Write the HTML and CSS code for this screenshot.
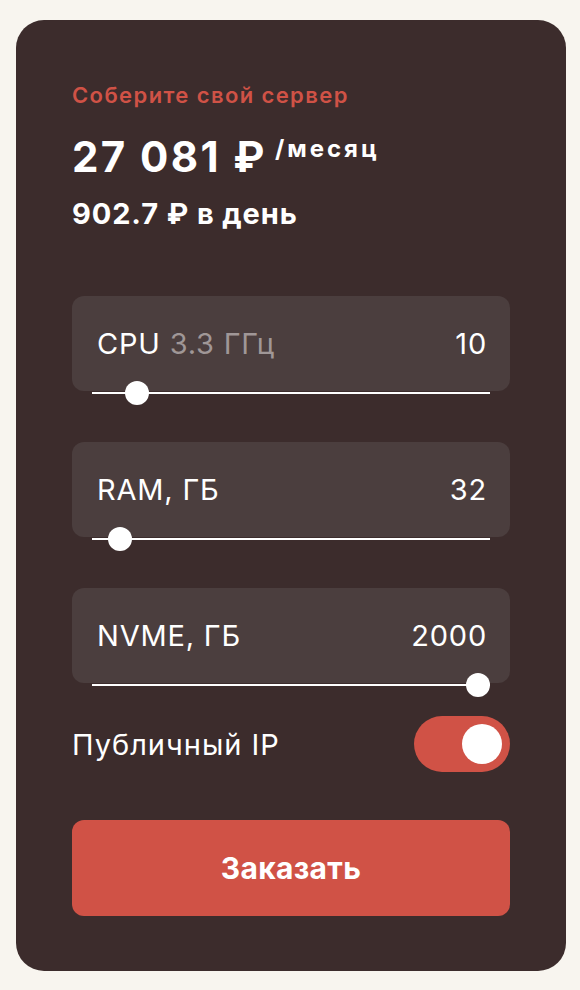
FILE: index.html
```html
<!DOCTYPE html>
<html lang="ru">
<head>
<meta charset="utf-8">
<title>Соберите свой сервер</title>
<link rel="stylesheet" href="styles.css">
</head>
<body>
<div class="card">
  <div class="eyebrow">Соберите свой сервер</div>
  <div class="price"><span class="price-main">27 081 ₽</span><span class="price-unit">/месяц</span></div>
  <div class="daily">902.7 ₽ в день</div>

  <div class="fields">
    <div class="field">
      <div class="field-box">
        <span class="field-label">CPU <span class="muted">3.3 ГГц</span></span>
        <span class="field-value">10</span>
      </div>
      <div class="track"><span class="thumb" style="--p:0.088"></span></div>
    </div>
    <div class="field">
      <div class="field-box">
        <span class="field-label">RAM, ГБ</span>
        <span class="field-value">32</span>
      </div>
      <div class="track"><span class="thumb" style="--p:0.043"></span></div>
    </div>
    <div class="field">
      <div class="field-box">
        <span class="field-label">NVME, ГБ</span>
        <span class="field-value">2000</span>
      </div>
      <div class="track"><span class="thumb" style="--p:1"></span></div>
    </div>
  </div>

  <div class="toggle-row">
    <span class="toggle-label">Публичный IP</span>
    <span class="toggle on"><span class="knob"></span></span>
  </div>

  <button class="order">Заказать</button>
</div>
</body>
</html>
```

FILE: styles.css
```css
* { box-sizing: border-box; }
html, body { margin: 0; padding: 0; }
body {
  background: #f8f5ef;
  font-family: Inter, "Noto Sans", sans-serif;
  color: #fff;
  padding: 20px 14px 19px 16px;
}
.card {
  width: 550px;
  background: #3c2c2c;
  border-radius: 28px;
  padding: 62px 56px 55px 56px;
}
.eyebrow {
  color: #d05246;
  font-size: 22px;
  font-weight: 600;
  line-height: 26px;
  letter-spacing: 1.4px;
}
.price {
  margin-top: 28px;
  display: flex;
  align-items: flex-start;
  line-height: 1;
}
.price-main {
  font-size: 42px;
  font-weight: 700;
  letter-spacing: 2.4px;
}
.price-unit {
  font-size: 24px;
  font-weight: 700;
  letter-spacing: 3px;
  margin-left: 8px;
  margin-top: 1px;
}
.daily {
  margin-top: 19px;
  font-size: 29px;
  font-weight: 700;
  line-height: 34px;
  letter-spacing: 0.9px;
}
.fields {
  margin-top: 65px;
  display: flex;
  flex-direction: column;
  gap: 48px;
}
.field-box {
  height: 95px;
  background: #4b3e3e;
  border-radius: 12px;
  padding: 0 23px 0 25px;
  display: flex;
  justify-content: space-between;
  align-items: center;
  font-size: 29px;
  letter-spacing: 0.8px;
}
.muted { color: #a09797; }
.track {
  position: relative;
  height: 2px;
  background: #fff;
  margin: 1px 20px 0 20px;
}
.thumb {
  position: absolute;
  top: 50%;
  left: calc(12px + var(--p) * (100% - 24px));
  width: 24px;
  height: 24px;
  margin: -12px 0 0 -12px;
  border-radius: 50%;
  background: #fff;
}
.toggle-row {
  margin-top: 30px;
  display: flex;
  justify-content: space-between;
  align-items: center;
}
.toggle-label {
  font-size: 29px;
  letter-spacing: 1px;
}
.toggle {
  width: 96px;
  height: 56px;
  border-radius: 28px;
  background: #d05246;
  display: flex;
  align-items: center;
  justify-content: flex-end;
  padding: 0 8px;
}
.knob {
  width: 40px;
  height: 40px;
  border-radius: 50%;
  background: #fff;
}
.order {
  display: block;
  width: 100%;
  margin-top: 48px;
  height: 96px;
  border: 0;
  border-radius: 12px;
  background: #d05246;
  color: #fff;
  font-family: Inter, "Noto Sans", sans-serif;
  font-size: 30px;
  font-weight: 700;
  letter-spacing: 0.3px;
}
```
